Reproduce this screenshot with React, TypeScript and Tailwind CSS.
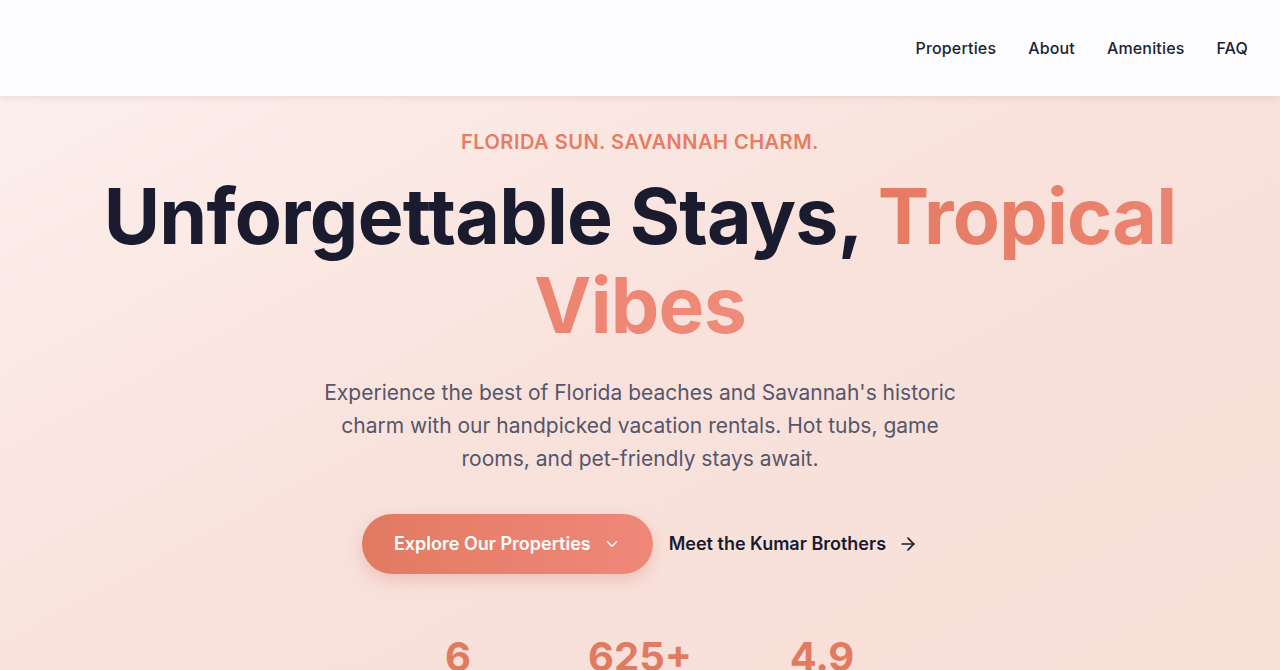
import { ChevronDown, ArrowRight } from "lucide-react";

const font = { fontFamily: "Inter, 'Noto Sans', sans-serif" };

export default function App() {
  return (
    <div style={font} className="min-h-screen bg-gradient-to-br from-[#fcf1ef] via-[#f9e2dc] to-[#f8dfd8] text-[#1a1b2e]">
      <header className="h-24 bg-[#fdfcfe] shadow-[0_2px_6px_rgba(120,80,80,0.12)] flex items-center justify-end px-8 relative z-10">
        <nav className="flex items-center gap-8 text-base font-medium text-[#1e1f33] tracking-[0.01em]">
          <a>Properties</a>
          <a>About</a>
          <a>Amenities</a>
          <a>FAQ</a>
        </nav>
      </header>

      <main className="flex flex-col items-center text-center pt-8">
        <p className="text-xl font-semibold tracking-wide text-[#e67c63] leading-7">
          FLORIDA SUN. SAVANNAH CHARM.
        </p>
        <h1 className="mt-4 text-[77px] leading-[89px] font-bold tracking-[-0.01em] max-w-[1140px]">
          Unforgettable Stays,{" "}
          <span className="bg-gradient-to-r from-[#e57b63] to-[#f08a7a] bg-clip-text text-transparent">
            Tropical Vibes
          </span>
        </h1>
        <p className="mt-[26px] text-[21px] leading-[33px] text-[#55566a] max-w-[640px]">
          Experience the best of Florida beaches and Savannah's historic charm with our handpicked vacation rentals. Hot tubs, game rooms, and pet-friendly stays await.
        </p>

        <div className="mt-[39px] flex items-center gap-4">
          <button className="h-[60px] px-8 rounded-full bg-gradient-to-r from-[#e27a62] to-[#f0887a] text-white text-lg font-semibold flex items-center gap-3 shadow-[0_6px_16px_rgba(200,100,80,0.25)]">
            Explore Our Properties
            <ChevronDown size={18} strokeWidth={2} />
          </button>
          <a className="h-[60px] flex items-center gap-3 text-lg font-semibold text-[#1a1b2e]">
            Meet the Kumar Brothers
            <ArrowRight size={20} strokeWidth={2} />
          </a>
        </div>

        <div className="mt-[59px] grid grid-cols-3 gap-0 w-[546px] text-[40px] font-bold text-[#e27a62] leading-[48px]">
          <div>6</div>
          <div>625+</div>
          <div>4.9</div>
        </div>
      </main>
    </div>
  );
}
